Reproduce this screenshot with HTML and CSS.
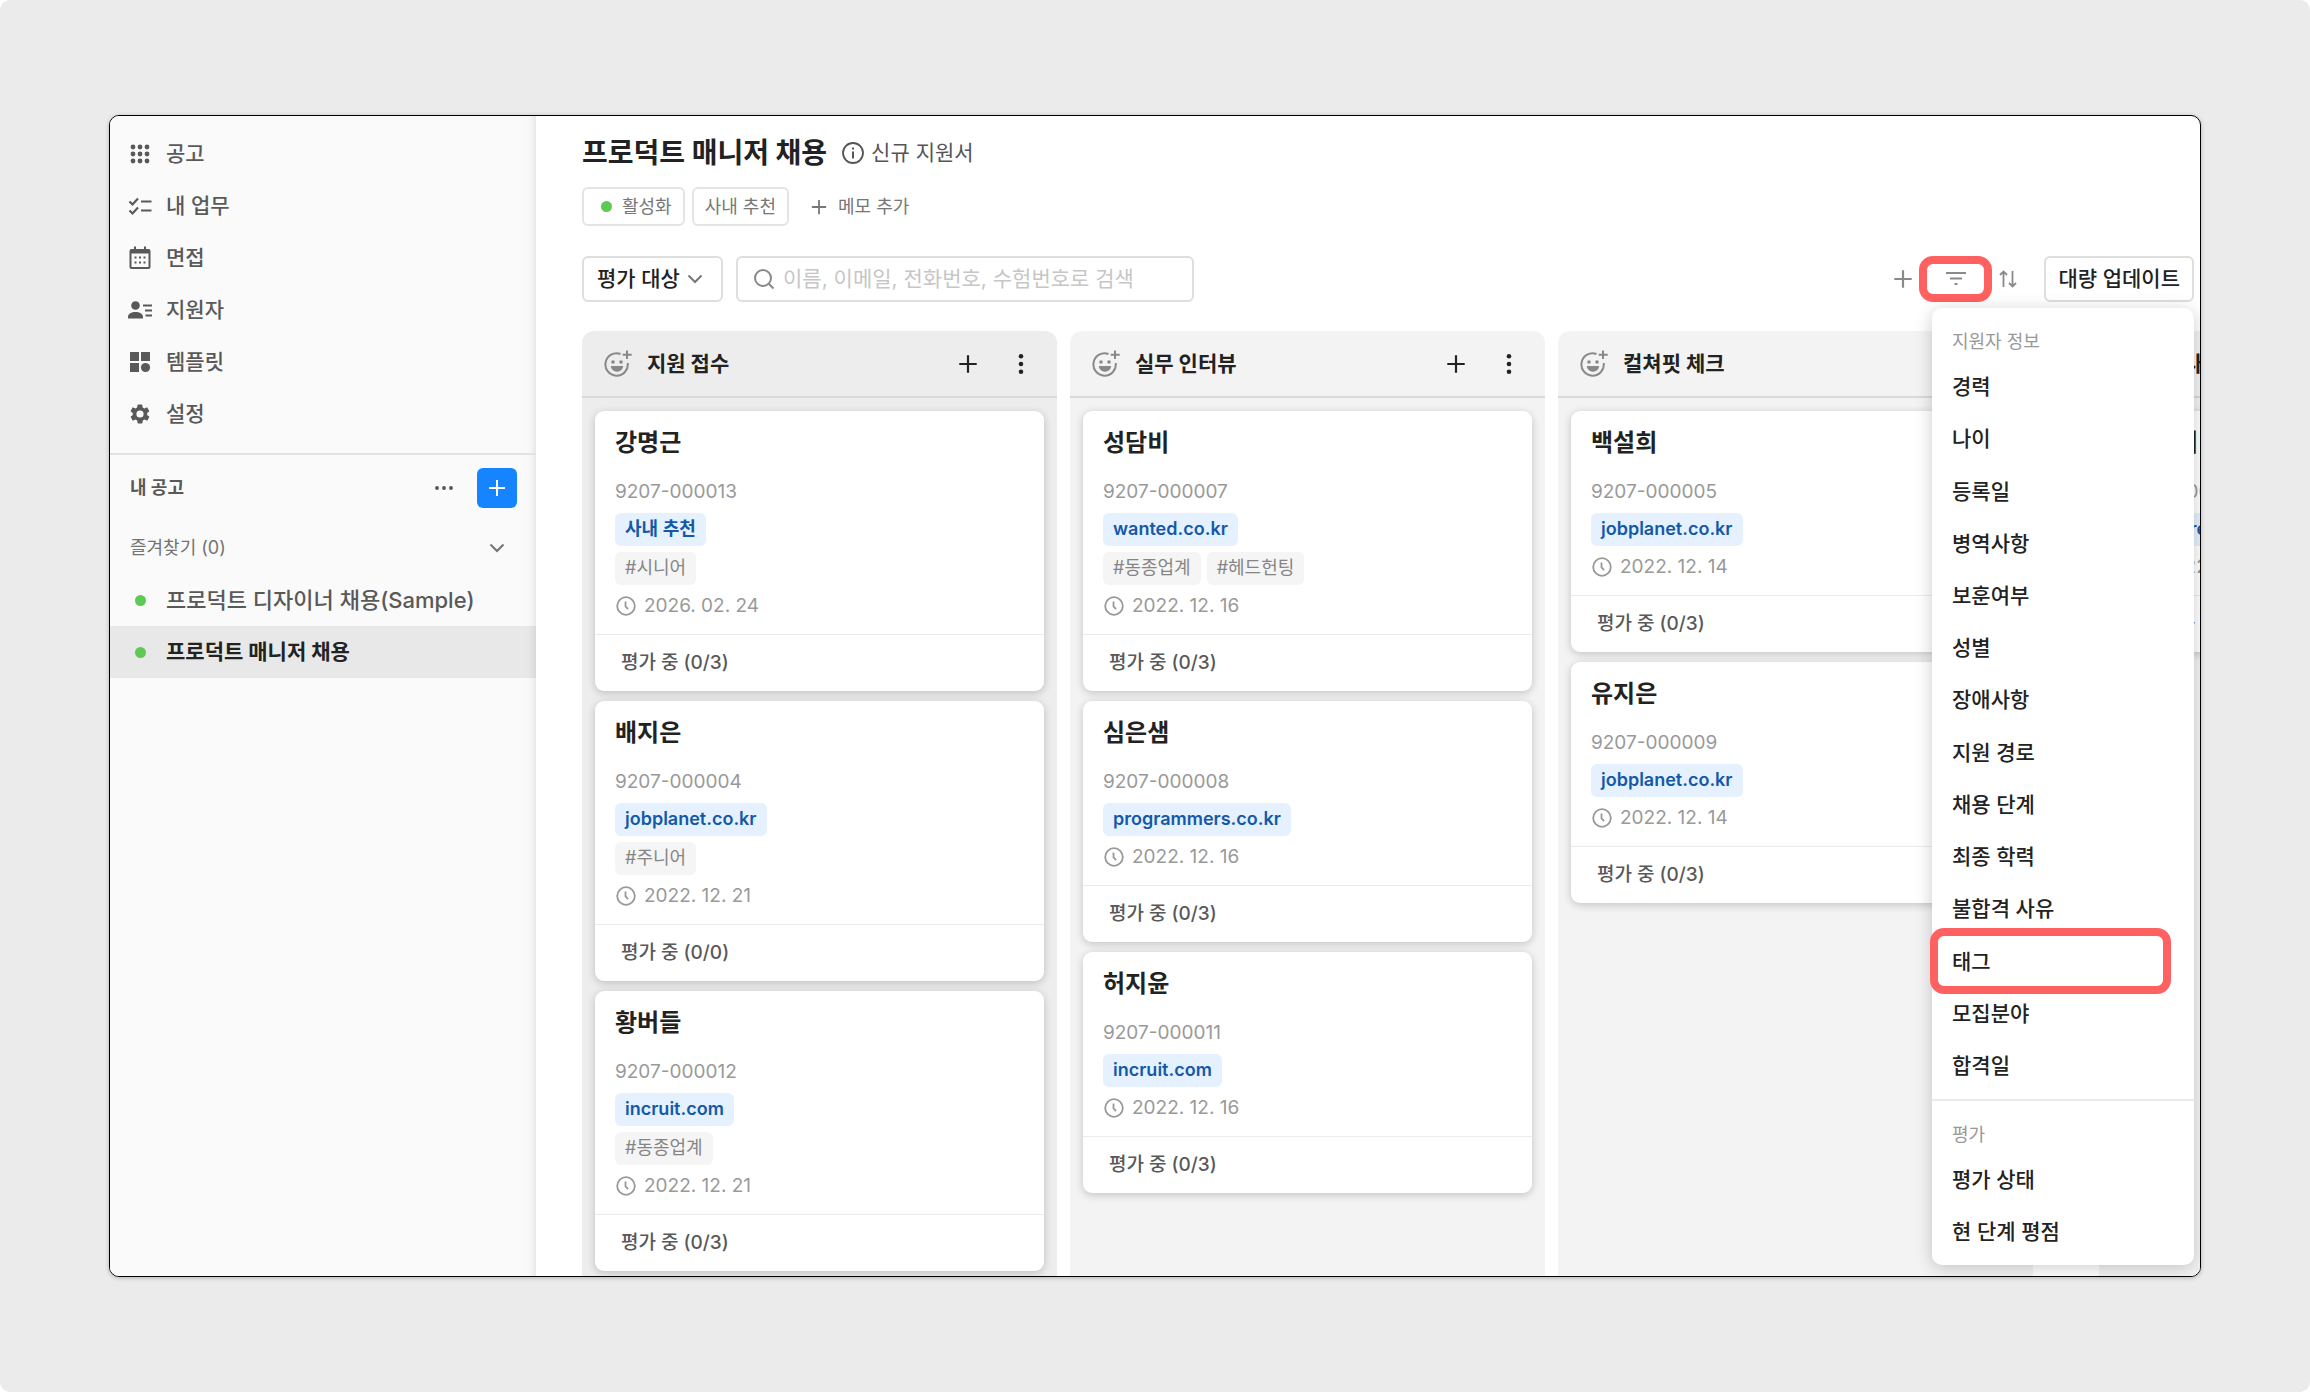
FILE: index.html
```html
<!DOCTYPE html>
<html lang="ko">
<head>
  <meta charset="UTF-8">
  <meta name="viewport" content="width=device-width, initial-scale=1">
  <title>프로덕트 매니저 채용</title>
  <link rel="stylesheet" href="styles.css">
</head>
<body>
  <!-- shared icons -->
  <svg class="sprite" aria-hidden="true">
    <symbol id="i-plus" viewBox="0 0 24 24"><path d="M12 2.5v19M2.5 12h19" fill="none" stroke="currentColor" stroke-width="2.4"/></symbol>
    <symbol id="i-chevron" viewBox="0 0 16 16"><path d="M1.5 4.5 8 11l6.500-6.500" fill="none" stroke="currentColor" stroke-width="2"/></symbol>
    <symbol id="i-more" viewBox="0 0 24 24"><circle cx="12" cy="3.500" r="2.500"/><circle cx="12" cy="12" r="2.500"/><circle cx="12" cy="20.500" r="2.500"/></symbol>
    <symbol id="i-clock" viewBox="0 0 20 20"><circle cx="10" cy="10" r="8.800" fill="none" stroke="currentColor" stroke-width="1.800"/><path d="M9.500 5.500v4.800l2.600 2.800" fill="none" stroke="currentColor" stroke-width="1.800"/></symbol>
    <symbol id="i-smile" viewBox="0 0 28 28">
      <path d="M16.500 4A11.200 11.200 0 1 0 23.700 13" fill="none" stroke="currentColor" stroke-width="2"/>
      <path d="M23 .5v8.500M18.700 4.700h9" fill="none" stroke="currentColor" stroke-width="2"/>
      <circle cx="9" cy="12" r="1.800"/><circle cx="17" cy="12" r="1.800"/>
      <path d="M6.800 16h12.400a6.200 5.800 0 0 1-12.400 0z"/>
    </symbol>
  </svg>

  <div class="window">
    <aside class="sidebar">
      <nav class="nav">
        <a href="#" class="nav-item">
          <svg class="nav-icon" viewBox="0 0 24 24"><circle cx="5" cy="5" r="2.400"/><circle cx="12" cy="5" r="2.400"/><circle cx="19" cy="5" r="2.400"/><circle cx="5" cy="12" r="2.400"/><circle cx="12" cy="12" r="2.400"/><circle cx="19" cy="12" r="2.400"/><circle cx="5" cy="19" r="2.400"/><circle cx="12" cy="19" r="2.400"/><circle cx="19" cy="19" r="2.400"/></svg>
          공고
        </a>
        <a href="#" class="nav-item">
          <svg class="nav-icon" viewBox="0 0 24 24"><path d="M1.500 7.500l3 3 5.500-6M1.500 16.500l3 3 5.500-6M13 7.500h10.500M13 16.500h10.500" fill="none" stroke="currentColor" stroke-width="2.200"/></svg>
          내 업무
        </a>
        <a href="#" class="nav-item">
          <svg class="nav-icon" viewBox="0 0 24 24"><path d="M6 .5h2V3h8V.5h2V3h2.500A2 2 0 0 1 22.500 5v16a2 2 0 0 1-2 2h-17a2 2 0 0 1-2-2V5a2 2 0 0 1 2-2H6zM3.500 7.500V21h17V7.500z"/><path d="M6.500 10.500h2v2h-2zm4.500 0h2v2h-2zm4.500 0h2v2h-2zM6.500 15.500h2v2h-2zm4.500 0h2v2h-2zm4.500 0h2v2h-2z"/></svg>
          면접
        </a>
        <a href="#" class="nav-item">
          <svg class="nav-icon" viewBox="0 0 24 24"><circle cx="7.500" cy="7.500" r="4.300"/><path d="M0 20.500v-1.500c0-3.500 3.500-5 7.500-5s7.500 1.500 7.500 5v1.500zM15 6.500h9v2h-9zM17 11.500h7v2h-7zM17.500 16.500H24v2h-6.500z"/></svg>
          지원자
        </a>
        <a href="#" class="nav-item">
          <svg class="nav-icon" viewBox="0 0 24 24"><path d="M2 2h9v9H2zM13 2h9v9h-9zM2 13h9v9H2z"/><circle cx="17.500" cy="17.500" r="4.600"/></svg>
          템플릿
        </a>
        <a href="#" class="nav-item">
          <svg class="nav-icon" viewBox="0 0 24 24"><path fill-rule="evenodd" d="M19.100 12.900a7 7 0 0 0 0-1.800l2-1.600a.5.5 0 0 0 .1-.6l-1.900-3.300a.5.5 0 0 0-.6-.2l-2.400 1a7 7 0 0 0-1.600-1l-.4-2.500a.5.5 0 0 0-.5-.4h-3.800a.5.5 0 0 0-.5.4l-.4 2.500a7 7 0 0 0-1.600 1l-2.400-1a.5.5 0 0 0-.6.200L2.700 8.900a.5.5 0 0 0 .1.600l2 1.600a7 7 0 0 0 0 1.800l-2 1.600a.5.5 0 0 0-.1.600l1.900 3.300c.1.200.4.300.6.200l2.400-1a7 7 0 0 0 1.600 1l.4 2.500c0 .2.200.4.500.4h3.800c.3 0 .5-.2.5-.4l.4-2.500a7 7 0 0 0 1.600-1l2.400 1c.2.100.5 0 .6-.2l1.900-3.300a.5.5 0 0 0-.1-.6zM12 15.600a3.600 3.600 0 1 1 0-7.200 3.600 3.600 0 0 1 0 7.200z"/></svg>
          설정
        </a>
      </nav>

      <div class="jobs-header">
        <h2>내 공고</h2>
        <button class="icon-button" aria-label="더보기">
          <svg width="20" height="20" viewBox="0 0 20 20"><circle cx="3" cy="10" r="1.900"/><circle cx="10" cy="10" r="1.900"/><circle cx="17" cy="10" r="1.900"/></svg>
        </button>
        <button class="add-job" aria-label="공고 추가"><svg width="20" height="20"><use href="#i-plus"/></svg></button>
      </div>
      <button class="favorites">즐겨찾기 (0) <svg width="16" height="16"><use href="#i-chevron"/></svg></button>
      <a href="#" class="nav-item job"><span class="dot"></span>프로덕트 디자이너 채용(Sample)</a>
      <a href="#" class="nav-item job current"><span class="dot"></span>프로덕트 매니저 채용</a>
    </aside>

    <main class="main">
      <header class="title-row">
        <h1>프로덕트 매니저 채용</h1>
        <a href="#" class="form-link">
          <svg width="24" height="24" viewBox="0 0 24 24"><circle cx="12" cy="12" r="10" fill="none" stroke="currentColor" stroke-width="1.800"/><path d="M11 6.500h2v2h-2zM11 10.500h2v7h-2z"/></svg>
          신규 지원서
        </a>
      </header>

      <div class="chips">
        <button class="chip chip-status"><span class="dot"></span>활성화</button>
        <button class="chip">사내 추천</button>
        <button class="memo"><svg width="18" height="18"><use href="#i-plus"/></svg>메모 추가</button>
      </div>

      <div class="toolbar">
        <button class="box-button target">평가 대상 <svg width="16" height="16"><use href="#i-chevron"/></svg></button>
        <label class="search">
          <svg width="22" height="22" viewBox="0 0 22 22"><circle cx="10" cy="10" r="8" fill="none" stroke="currentColor" stroke-width="2"/><path d="m15.800 15.800 4.700 4.700" stroke="currentColor" stroke-width="2"/></svg>
          <input type="text" aria-label="지원자 검색" placeholder="이름, 이메일, 전화번호, 수험번호로 검색">
        </label>
        <div class="tools">
          <button class="icon-button" aria-label="추가"><svg width="22" height="22"><use href="#i-plus"/></svg></button>
          <button class="icon-button filter" aria-label="필터">
            <svg width="22" height="22" viewBox="0 0 22 22"><path d="M1 4h20v2H1zM5 9.500h12v2H5zM9.500 15h3v2h-3z"/></svg>
          </button>
          <button class="icon-button" aria-label="정렬">
            <svg width="20" height="20" viewBox="0 0 20 20"><path d="M5.500 18V3M2 6l3.500-3.500L9 6M14.500 2v15M11 14l3.500 3.500L18 14" fill="none" stroke="currentColor" stroke-width="1.800"/></svg>
          </button>
          <button class="box-button">대량 업데이트</button>
        </div>
      </div>

      <div class="board">
        <section class="column first">
          <header class="column-header">
            <svg class="smile"><use href="#i-smile"/></svg>
            <h2>지원 접수</h2>
            <button class="icon-button" aria-label="지원자 추가"><svg width="22" height="22"><use href="#i-plus"/></svg></button>
            <button class="icon-button" aria-label="더보기"><svg width="22" height="22"><use href="#i-more"/></svg></button>
          </header>
          <div class="cards">
            <article class="card">
              <div class="card-body">
                <h3>강명근</h3>
                <p class="code">9207-000013</p>
                <div class="labels"><span class="source">사내 추천</span></div>
                <div class="labels"><span class="tag">#시니어</span></div>
                <p class="date"><svg><use href="#i-clock"/></svg>2026. 02. 24</p>
              </div>
              <footer>평가 중 (0/3)</footer>
            </article>
            <article class="card">
              <div class="card-body">
                <h3>배지은</h3>
                <p class="code">9207-000004</p>
                <div class="labels"><span class="source">jobplanet.co.kr</span></div>
                <div class="labels"><span class="tag">#주니어</span></div>
                <p class="date"><svg><use href="#i-clock"/></svg>2022. 12. 21</p>
              </div>
              <footer>평가 중 (0/0)</footer>
            </article>
            <article class="card">
              <div class="card-body">
                <h3>황버들</h3>
                <p class="code">9207-000012</p>
                <div class="labels"><span class="source">incruit.com</span></div>
                <div class="labels"><span class="tag">#동종업계</span></div>
                <p class="date"><svg><use href="#i-clock"/></svg>2022. 12. 21</p>
              </div>
              <footer>평가 중 (0/3)</footer>
            </article>
          </div>
        </section>

        <section class="column">
          <header class="column-header">
            <svg class="smile"><use href="#i-smile"/></svg>
            <h2>실무 인터뷰</h2>
            <button class="icon-button" aria-label="지원자 추가"><svg width="22" height="22"><use href="#i-plus"/></svg></button>
            <button class="icon-button" aria-label="더보기"><svg width="22" height="22"><use href="#i-more"/></svg></button>
          </header>
          <div class="cards">
            <article class="card">
              <div class="card-body">
                <h3>성담비</h3>
                <p class="code">9207-000007</p>
                <div class="labels"><span class="source">wanted.co.kr</span></div>
                <div class="labels"><span class="tag">#동종업계</span><span class="tag">#헤드헌팅</span></div>
                <p class="date"><svg><use href="#i-clock"/></svg>2022. 12. 16</p>
              </div>
              <footer>평가 중 (0/3)</footer>
            </article>
            <article class="card">
              <div class="card-body">
                <h3>심은샘</h3>
                <p class="code">9207-000008</p>
                <div class="labels"><span class="source">programmers.co.kr</span></div>
                <p class="date"><svg><use href="#i-clock"/></svg>2022. 12. 16</p>
              </div>
              <footer>평가 중 (0/3)</footer>
            </article>
            <article class="card">
              <div class="card-body">
                <h3>허지윤</h3>
                <p class="code">9207-000011</p>
                <div class="labels"><span class="source">incruit.com</span></div>
                <p class="date"><svg><use href="#i-clock"/></svg>2022. 12. 16</p>
              </div>
              <footer>평가 중 (0/3)</footer>
            </article>
          </div>
        </section>

        <section class="column">
          <header class="column-header">
            <svg class="smile"><use href="#i-smile"/></svg>
            <h2>컬쳐핏 체크</h2>
            <button class="icon-button" aria-label="지원자 추가"><svg width="22" height="22"><use href="#i-plus"/></svg></button>
            <button class="icon-button" aria-label="더보기"><svg width="22" height="22"><use href="#i-more"/></svg></button>
          </header>
          <div class="cards">
            <article class="card">
              <div class="card-body">
                <h3>백설희</h3>
                <p class="code">9207-000005</p>
                <div class="labels"><span class="source">jobplanet.co.kr</span></div>
                <p class="date"><svg><use href="#i-clock"/></svg>2022. 12. 14</p>
              </div>
              <footer>평가 중 (0/3)</footer>
            </article>
            <article class="card">
              <div class="card-body">
                <h3>유지은</h3>
                <p class="code">9207-000009</p>
                <div class="labels"><span class="source">jobplanet.co.kr</span></div>
                <p class="date"><svg><use href="#i-clock"/></svg>2022. 12. 14</p>
              </div>
              <footer>평가 중 (0/3)</footer>
            </article>
          </div>
        </section>

        <section class="column last">
          <header class="column-header">
            <svg class="smile"><use href="#i-smile"/></svg>
            <h2>입사</h2>
          </header>
          <div class="cards">
            <article class="card">
              <div class="card-body">
                <h3>김은비</h3>
                <p class="code">9207-000006</p>
                <div class="labels"><span class="source">jobkorea.co.kr</span></div>
                <p class="date"><svg><use href="#i-clock"/></svg>2022. 12. 14</p>
              </div>
              <footer>평가 중 (0/3)</footer>
            </article>
          </div>
        </section>
      </div>
    </main>

    <div class="filter-menu">
      <div class="menu-group applicant">
        <h4>지원자 정보</h4>
        <button>경력</button>
        <button>나이</button>
        <button>등록일</button>
        <button>병역사항</button>
        <button>보훈여부</button>
        <button>성별</button>
        <button>장애사항</button>
        <button>지원 경로</button>
        <button>채용 단계</button>
        <button>최종 학력</button>
        <button>불합격 사유</button>
        <button class="highlight">태그</button>
        <button>모집분야</button>
        <button>합격일</button>
      </div>
      <div class="menu-group">
        <h4>평가</h4>
        <button>평가 상태</button>
        <button>현 단계 평점</button>
      </div>
    </div>
  </div>
</body>
</html>
```

FILE: styles.css
```css
:root {
  --text: #222;
  --text-mid: #595959;
  --text-light: #999;
  --line: #dedede;
  --green: #5bcb52;
  --blue: #1684ff;
  --mark: #ff6060;
}
* {
  box-sizing: border-box;
}
html {
  background: #fff;
}
body {
  margin: 0;
  height: 100vh;
  padding: 115px 109px;
  background: #ebebeb;
  border-radius: 10px;
  font-family: Inter, "Noto Sans CJK KR", sans-serif;
  font-size: 21px;
  line-height: 32px;
  color: var(--text);
}
h1, h2, h3, h4, p {
  margin: 0;
}
a {
  color: inherit;
  text-decoration: none;
}
button {
  font: inherit;
  color: inherit;
  background: none;
  border: none;
  padding: 0;
  cursor: pointer;
  white-space: nowrap;
}
svg {
  flex: none;
  fill: currentColor;
}
.sprite {
  display: none;
}
.window {
  position: relative;
  display: flex;
  height: 100%;
  overflow: hidden;
  background: #fff;
  border: 1px solid #000;
  border-radius: 10px;
  box-shadow: 0 1px 4px rgba(0,0,0,0.25);
}

/* sidebar */
.sidebar {
  flex: none;
  width: 426px;
  background: #fafafa;
  box-shadow: inset -8px 0 8px -6px rgba(0,0,0,0.1);
}
.nav {
  padding: 12px 0 13px;
  border-bottom: 2px solid #e2e2e2;
}
.nav-item {
  display: flex;
  align-items: center;
  gap: 14px;
  height: 52px;
  padding-left: 18px;
  font-weight: 500;
  color: var(--text-mid);
}
.nav-icon {
  width: 24px;
  height: 24px;
}
.dot {
  flex: none;
  width: 11px;
  height: 11px;
  border-radius: 50%;
  background: var(--green);
}
.jobs-header {
  display: flex;
  align-items: center;
  height: 66px;
  padding: 0 19px 0 20px;
}
.jobs-header h2 {
  flex: 1;
  font-size: 18px;
  font-weight: 700;
  color: var(--text-mid);
}
.icon-button {
  display: flex;
  align-items: center;
  justify-content: center;
  width: 46px;
  height: 46px;
  color: #555;
}
.add-job {
  display: flex;
  align-items: center;
  justify-content: center;
  width: 40px;
  height: 40px;
  margin-left: 10px;
  border-radius: 6px;
  background: var(--blue);
  color: #fff;
}
.favorites {
  display: flex;
  align-items: center;
  justify-content: space-between;
  width: 100%;
  height: 53px;
  padding: 0 31px 0 20px;
  font-size: 18px;
  color: #737373;
}
.job {
  gap: 20px;
  padding-left: 25px;
  font-size: 22px;
}
.current {
  background: rgba(0,0,0,0.07);
  color: var(--text);
  font-size: 21px;
  font-weight: 700;
}

/* page header */
.main {
  flex: 1;
  min-width: 0;
  display: flex;
  flex-direction: column;
  padding: 17px 6px 0 46px;
}
.title-row {
  display: flex;
  align-items: center;
  gap: 14px;
  height: 40px;
}
h1 {
  font-size: 28px;
  font-weight: 700;
}
.form-link {
  display: flex;
  align-items: center;
  gap: 6px;
  color: #555;
}
.chips {
  display: flex;
  gap: 7px;
  margin-top: 14px;
  font-size: 18px;
  color: #777;
}
.chip {
  height: 39px;
  padding: 0 11px;
  border: 2px solid #e4e4e4;
  border-radius: 6px;
}
.chip-status {
  display: flex;
  align-items: center;
  gap: 10px;
  padding-left: 17px;
}
.memo {
  display: flex;
  align-items: center;
  gap: 10px;
  padding-left: 14px;
}
.toolbar {
  display: flex;
  gap: 13px;
  margin-top: 30px;
}
.box-button {
  height: 46px;
  padding: 0 12px;
  border: 2px solid var(--line);
  border-radius: 6px;
  font-weight: 500;
}
.target {
  display: flex;
  align-items: center;
  justify-content: space-between;
  width: 141px;
  padding: 0 18px 0 13px;
}
.target svg {
  color: #777;
}
.search {
  display: flex;
  align-items: center;
  gap: 8px;
  width: 458px;
  height: 46px;
  padding: 0 15px;
  border: 2px solid var(--line);
  border-radius: 6px;
  color: #888;
}
.search input {
  flex: 1;
  min-width: 0;
  padding: 0;
  border: none;
  outline: none;
  font: inherit;
  background: none;
}
.search input::placeholder {
  color: #c6c6c6;
}
.tools {
  display: flex;
  align-items: center;
  margin-left: auto;
}
.tools .icon-button {
  width: 32px;
  color: #8a8a8a;
}
.tools .filter {
  width: 73px;
  border: 8px solid var(--mark);
  border-radius: 14px;
}
.tools .box-button {
  margin-left: 20px;
}

/* board */
.board {
  flex: 1;
  min-height: 0;
  display: flex;
  gap: 13px;
  margin-top: 29px;
}
.column {
  flex: none;
  width: 475px;
  overflow: hidden;
  border-radius: 12px 12px 0 0;
  background: #f3f3f3;
}
.first {
  background: #ededed;
}
.last {
  margin-left: 53px;
}
.column-header {
  display: flex;
  align-items: center;
  height: 67px;
  padding: 0 13px 0 22px;
  border-bottom: 2px solid #d9d9d9;
}
.column-header h2 {
  flex: 1;
  font-size: 21px;
  font-weight: 700;
}
.column-header .icon-button {
  color: var(--text);
  margin-left: 7px;
}
.smile {
  width: 28px;
  height: 28px;
  margin-right: 15px;
  color: #888;
}
.cards {
  display: flex;
  flex-direction: column;
  gap: 10px;
  padding: 13px;
}
.card {
  border-radius: 9px;
  background: #fff;
  box-shadow: 0 2px 8px rgba(0,0,0,0.2);
}
.card-body {
  padding: 16px 20px 14px;
}
.card h3 {
  margin-bottom: 19px;
  font-size: 24px;
  font-weight: 700;
}
.code,
.date {
  font-size: 19px;
  line-height: 28px;
  color: var(--text-light);
}
.code {
  margin-bottom: 7px;
}
.labels {
  display: flex;
  gap: 6px;
}
.labels + .labels {
  margin-top: 6px;
}
.source,
.tag {
  height: 33px;
  padding: 0 10px;
  border-radius: 6px;
  font-size: 18px;
}
.source {
  background: #e5f1ff;
  color: #1459a8;
  font-weight: 600;
}
.tag {
  background: #f5f5f5;
  color: #858585;
}
.date {
  display: flex;
  align-items: center;
  gap: 8px;
  margin-top: 7px;
}
.date svg {
  width: 20px;
  height: 20px;
  margin-left: 1px;
}
.card footer {
  height: 57px;
  padding-left: 26px;
  border-top: 1px solid #ebebeb;
  font-size: 19px;
  font-weight: 500;
  line-height: 56px;
  color: var(--text-mid);
}

/* filter menu, opens under the toolbar */
.filter-menu {
  position: absolute;
  top: 192px;
  right: 6px;
  bottom: 11px;
  display: flex;
  flex-direction: column;
  width: 262px;
  border-radius: 10px;
  background: #fff;
  box-shadow: 0 3px 18px rgba(0,0,0,0.2);
}
.menu-group {
  display: flex;
  flex-direction: column;
  padding: 15px 0 7px;
}
.menu-group h4 {
  padding: 0 20px;
  height: 38px;
  line-height: 38px;
  font-size: 18px;
  font-weight: 400;
  color: var(--text-light);
}
.menu-group button {
  position: relative;
  flex: 1 0 52px;
  padding: 0 20px;
  text-align: left;
  font-weight: 500;
}
.applicant {
  flex: 1;
  border-bottom: 2px solid #ebebeb;
}
.highlight::after {
  content: "";
  position: absolute;
  inset: -7px 23px -6px -2px;
  border: 8px solid var(--mark);
  border-radius: 14px;
}
```
